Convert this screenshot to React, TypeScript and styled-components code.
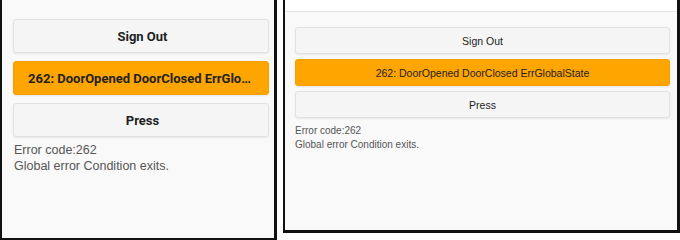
import styled, { createGlobalStyle } from 'styled-components'

const GlobalStyle = createGlobalStyle`
  html, body {
    margin: 0;
    padding: 0;
    background: #ffffff;
  }
  body {
    width: 680px;
    height: 240px;
    overflow: hidden;
  }
`

const Page = styled.div`
  display: flex;
  align-items: flex-start;
  gap: 6px;
  width: 680px;
  height: 240px;
`

const Panel = styled.div<{ $wide?: boolean }>`
  box-sizing: border-box;
  display: flex;
  flex-direction: column;
  background: #f9f9f9;
  border: 0 solid #111;
  border-left-width: 2px;
  border-right-width: 3px;
  border-bottom-width: ${(p) => (p.$wide ? '3px' : '2px')};
  width: ${(p) => (p.$wide ? '397px' : '277px')};
  height: ${(p) => (p.$wide ? '233px' : '240px')};
  font-family: ${(p) =>
    p.$wide ? '"Liberation Sans", Arial, sans-serif' : 'Roboto, "Liberation Sans", sans-serif'};
`

const TopBar = styled.div`
  height: 11px;
  background: #ffffff;
  border-bottom: 1px solid #e4e4e4;
`

const Body = styled.div<{ $wide?: boolean }>`
  display: flex;
  flex-direction: column;
  gap: ${(p) => (p.$wide ? '5px' : '8px')};
  padding: ${(p) => (p.$wide ? '15px 7px 0 10px' : '19px 5px 0 11px')};
`

const Button = styled.button<{ $alert?: boolean; $wide?: boolean }>`
  box-sizing: border-box;
  display: block;
  width: 100%;
  height: ${(p) => (p.$wide ? '27px' : '34px')};
  padding: 0 ${(p) => (p.$wide ? '10px' : '11px')} 0 ${(p) => (p.$wide ? '10px' : '14px')};
  border: 1px solid ${(p) => (p.$alert ? '#f5a000' : '#e2e2e2')};
  border-radius: 3px;
  background: ${(p) => (p.$alert ? '#ffa500' : '#f5f5f5')};
  box-shadow: 0 1px 2px rgba(0, 0, 0, 0.08);
  color: #222;
  font-family: inherit;
  font-size: ${(p) => (p.$wide ? '10.5px' : '13px')};
  font-weight: ${(p) => (p.$wide ? 'normal' : 'bold')};
  text-align: center;
  white-space: nowrap;
  overflow: hidden;
  text-overflow: ellipsis;
  cursor: pointer;
`

const Message = styled.div<{ $wide?: boolean }>`
  margin-top: ${(p) => (p.$wide ? '1px' : '-3px')};
  padding-left: ${(p) => (p.$wide ? '0' : '1px')};
  color: #555;
  font-family: "Liberation Sans", Arial, sans-serif;
  font-size: ${(p) => (p.$wide ? '10px' : '12.5px')};
  line-height: ${(p) => (p.$wide ? '13.5px' : '16px')};
`

function ErrorPanel({ wide }: { wide?: boolean }) {
  return (
    <Panel $wide={wide}>
      {wide && <TopBar />}
      <Body $wide={wide}>
        <Button $wide={wide}>Sign Out</Button>
        <Button $wide={wide} $alert>
          262: DoorOpened DoorClosed ErrGlobalState
        </Button>
        <Button $wide={wide}>Press</Button>
        <Message $wide={wide}>
          Error code:262
          <br />
          Global error Condition exits.
        </Message>
      </Body>
    </Panel>
  )
}

export default function App() {
  return (
    <>
      <GlobalStyle />
      <Page>
        <ErrorPanel />
        <ErrorPanel wide />
      </Page>
    </>
  )
}
